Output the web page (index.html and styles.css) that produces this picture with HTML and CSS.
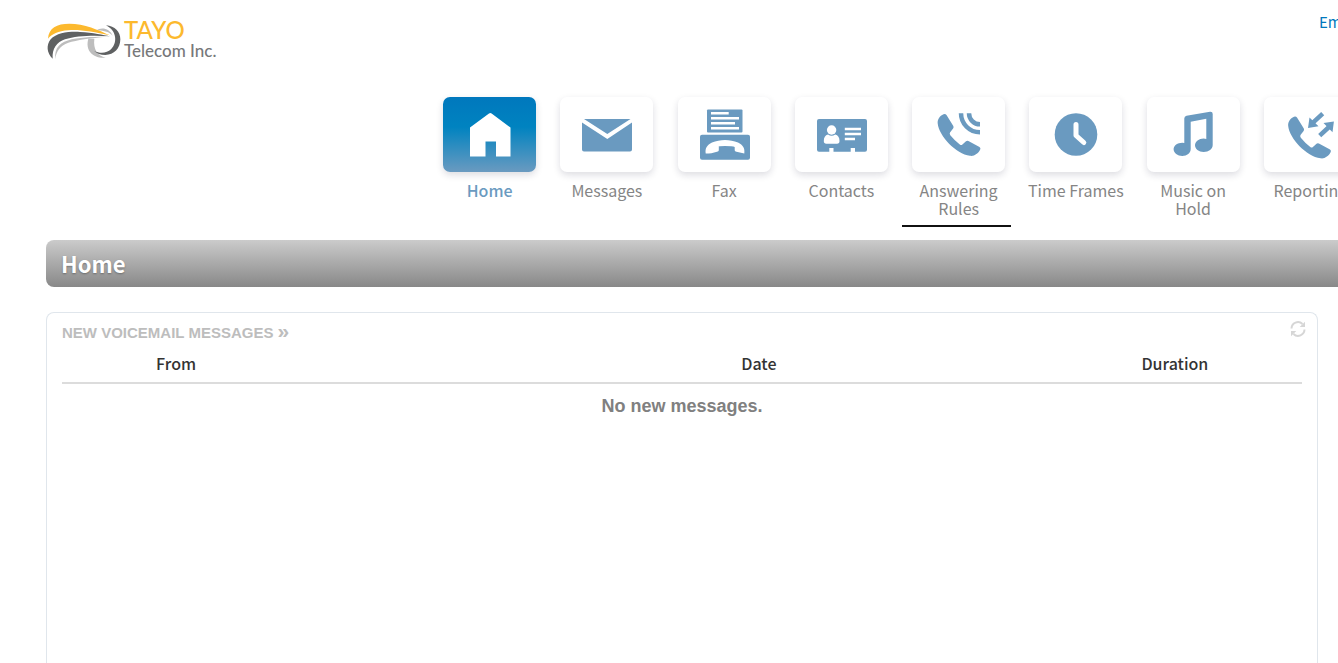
FILE: index.html
```html
<!DOCTYPE html>
<html lang="en">
<head>
<meta charset="utf-8">
<title>Home</title>
<link rel="stylesheet" href="styles.css">
</head>
<body>
<div class="page">
  <header class="top">
    <a class="logo" href="#">
      <svg class="logo-mark" viewBox="18 24 228 132" aria-hidden="true">
        <path fill="#bdbdbd" d="M46 148C42 112 62 96 95 88c35-8 75-8 105-8-50 4-90 10-115 18-25 9-37 27-39 50zM145 86c-10 34 12 60 52 57-24-6-38-24-34-57zM168 62c17-13 41-6 50 15-12-12-28-16-50-15z"/>
        <path fill="#fcb92e" d="M24 86C26 54 50 41 88 41c45 0 88 19 122 35-50-10-90-18-125-15-30 2-50 12-61 25z"/>
        <path fill="#5f6162" d="M38 146C20 130 18 105 32 88 50 68 90 64 120 66c40 2 70 9 90 13-50-4-100-2-135 9-25 8-39 28-37 58zM198 46c27 2 43 19 43 42 0 27-19 47-45 47-14 0-26-5-34-13 18 10 38 8 51-4 19-18 19-55-15-72z"/>
      </svg>
      <span class="logo-text"><span class="logo-name">TAYO</span><span class="logo-sub">Telecom Inc.</span></span>
    </a>
    <a class="account" href="#">Em</a>
  </header>

  <nav class="nav" aria-label="Main">
    <a class="item active" href="#">
      <span class="tile"><svg viewBox="0 0 93 75"><path d="M46 16.500q1.300-1 2.600 0L67.500 30.500V59.500H53V44.500H42.500V59.500H27V30.500z"/></svg></span>
      <span class="label">Home</span>
    </a>
    <a class="item" href="#">
      <span class="tile"><svg viewBox="0 0 93 75"><path d="M24 22H70.500L47.300 37zM22 25.500L47.300 42 72 25.500V52.500a2 2 0 0 1-2 2H24a2 2 0 0 1-2-2z"/></svg></span>
      <span class="label">Messages</span>
    </a>
    <a class="item" href="#">
      <span class="tile"><svg viewBox="0 0 93 75"><rect x="29" y="12.500" width="35.500" height="23" rx="1"/><rect x="22" y="37.700" width="50" height="25" rx="2"/><path class="cut" d="M33 16.300H50.700M33 21.300H61M33 26.300H57M33 31.300H61"/><path class="hole" d="M27.700 56.500C27 51 29 48 34 45.500c8-3.500 18-3.500 26 0 5 2.500 7 5.500 6.300 11L58.500 54.800c-1-.2-1.800-.8-1.800-1.800V50q-2-1-9.700-1t-6.200 1v3c0 1-.8 1.600-1.800 1.800-4 1.400-7 1.700-11.300 1.700z"/></svg></span>
      <span class="label">Fax</span>
    </a>
    <a class="item" href="#">
      <span class="tile"><svg viewBox="0 0 93 75"><path d="M24 22H70a2 2 0 0 1 2 2V52.700a2 2 0 0 1-2 2H60V51H55.700v3.700H38.500V51H34.300v3.700H24a2 2 0 0 1-2-2V24a2 2 0 0 1 2-2z"/><circle class="hole" cx="36.600" cy="33" r="4.700"/><path class="hole" d="M33 37.500q3.600 2.500 7.200 0 4.300 1 4.300 6.500 0 2.700-2.500 2.700H31.300q-2.500 0-2.500-2.700 0-5.500 4.200-6.500z"/><path class="cut" d="M49.800 32H66M49.800 37H66M49.800 42H60"/></svg></span>
      <span class="label">Contacts</span>
    </a>
    <a class="item marked" href="#">
      <span class="tile"><svg viewBox="0 0 93 75"><path id="handset" d="M31.500 17.300q1.800-.8 3 .8L41.300 29q.7 1.400-.2 2.600L38 35.500q-.7 1.300.3 2.700 4 5 9.500 9.200 1.400 1 2.600 0L54 44.300q1-1 2.400-.3L67.500 50q1.500 1 .7 2.600C66 57 62 59.500 58 58.800 44 57 27 39 25.700 26.500c-.4-4.200 2-7.500 5.800-9.200z"/><path class="line" d="M49 16.300A19 19 0 0 0 68 35.300M57 16.300A11 11 0 0 0 68 27.300"/></svg></span>
      <span class="label">Answering Rules</span>
    </a>
    <a class="item" href="#">
      <span class="tile"><svg viewBox="0 0 93 75"><circle cx="47" cy="37.500" r="21.300"/><path class="hand" d="M47 27.500V38.500L54.800 45.500"/></svg></span>
      <span class="label">Time Frames</span>
    </a>
    <a class="item" href="#">
      <span class="tile"><svg viewBox="0 0 93 75"><path d="M37.300 45.900V21.500q0-2.200 2.200-2.700L63 14.700q2.700-.3 2.700 2.300V48c0 4-4 7-9 7s-8.700-3-8.700-6.700 4-6.800 8.700-6.800q1.500 0 2.600.4V21.700L43.700 24.700V52c0 4-3.700 7-8.400 7s-8.700-3-8.700-6.700 4-6.500 8.700-6.500q1 0 2 .1z"/></svg></span>
      <span class="label">Music on Hold</span>
    </a>
    <a class="item" href="#">
      <span class="tile"><svg viewBox="0 0 93 75"><use href="#handset" transform="translate(-1.500 2.500)"/><path d="M44 31L45.500 20.500 54.500 29.300zM69.900 24.500L59.500 26 68.500 35.200z"/><path class="line" d="M49 25.600L58.700 16.600M55.700 38.700L65 30"/></svg></span>
      <span class="label">Reporting</span>
    </a>
  </nav>

  <h1 class="title">Home</h1>

  <main class="panel">
    <div class="panel-head">
      <h2 class="panel-title"><a href="#">NEW VOICEMAIL MESSAGES <span class="more">»</span></a></h2>
      <button class="refresh" type="button" aria-label="Refresh">
        <svg viewBox="0 0 16 16"><path d="M1.500 7.500A6.500 6.500 0 0 1 12.500 3M14.500 8.500A6.500 6.500 0 0 1 3.500 13"/><path class="tip" d="M15 .7V6H9.700zM1 15.300V10H6.300z"/></svg>
      </button>
    </div>
    <table class="list">
      <thead>
        <tr><th class="from">From</th><td class="name"></td><th class="date">Date</th><th class="duration">Duration</th></tr>
      </thead>
      <tbody>
        <tr><td class="empty" colspan="4">No new messages.</td></tr>
      </tbody>
    </table>
  </main>
</div>
</body>
</html>
```
FILE: styles.css
```css
* { box-sizing: border-box; }

body {
  margin: 0;
  background: #fff;
  color: #333;
  font-family: "Noto Sans CJK SC", "Noto Sans", sans-serif;
}

a { text-decoration: none; }

.page {
  display: flex;
  flex-direction: column;
  min-height: 100vh;
  padding: 0 20px 0 46px;
  overflow: hidden;
}

.top {
  display: flex;
  justify-content: space-between;
  align-items: flex-start;
  margin-right: -20px;
  padding-top: 12px;
}

.logo {
  display: flex;
  gap: 2px;
  padding-top: 6px;
}

.logo-mark {
  width: 76px;
  height: 44px;
}

.logo-text {
  display: flex;
  flex-direction: column;
  font-family: Lato, sans-serif;
  font-weight: 500;
}

.logo-name {
  color: #fcb92e;
  font-size: 24px;
  line-height: 24px;
}

.logo-sub {
  color: #77787a;
  font-size: 17px;
  line-height: 18px;
}

.account {
  flex: none;
  width: 19px;
  overflow: hidden;
  color: #0078bd;
  font-size: 15px;
  line-height: 20px;
}

.nav {
  display: grid;
  grid-template-columns: repeat(8, 1fr);
  flex: none;
  margin: 35px -51px 0 385px;
  min-height: 143px;
}

.item {
  position: relative;
  display: flex;
  flex-direction: column;
  align-items: center;
  gap: 9px;
  color: #858585;
}

.tile {
  width: 93px;
  height: 75px;
  border-radius: 7px;
  background: #fff;
  box-shadow: 0 3px 7px rgba(30, 30, 60, 0.15);
}

.tile svg {
  display: block;
  width: 93px;
  height: 75px;
  fill: #6a9ac0;
}

.tile .hole { fill: #fff; }

.tile .cut {
  fill: none;
  stroke: #fff;
  stroke-width: 2.5;
}

.tile .line {
  fill: none;
  stroke: #6a9ac0;
  stroke-width: 4.5;
}

.tile .hand {
  fill: none;
  stroke: #fff;
  stroke-width: 5;
  stroke-linecap: round;
  stroke-linejoin: round;
}

.label {
  max-width: 100px;
  font-size: 16px;
  line-height: 18px;
  text-align: center;
}

.active .tile { background: linear-gradient(#0078bd, #0083c0 40%, #6a9ac0); }
.active .tile svg { fill: #fff; }

.active .label {
  color: #6a9ac0;
  font-weight: 500;
}

.marked::after {
  content: "";
  position: absolute;
  top: 128px;
  left: 2px;
  width: 109px;
  height: 2px;
  background: #111;
}

.title {
  margin: 0 -20px 0 0;
  padding: 8px 15px 9px;
  border-radius: 8px 0 0 8px;
  background: linear-gradient(#cbcbcb, #888);
  color: #fff;
  font-size: 22px;
  font-weight: 700;
  line-height: 30px;
  text-shadow: 0 1px 2px rgba(0, 0, 0, 0.3);
}

.panel {
  flex: 1;
  margin-top: 25px;
  padding: 8px 15px;
  border: 1px solid #e0e6ec;
  border-bottom: 0;
  border-radius: 8px 8px 0 0;
}

.panel-head {
  display: flex;
  justify-content: space-between;
  align-items: flex-start;
}

.panel-title {
  margin: 0;
  padding-top: 2px;
  font-family: "Liberation Sans", Arial, sans-serif;
  font-size: 15px;
  line-height: 20px;
}

.panel-title a { color: #bdbdbd; }

.more {
  font-size: 21px;
  line-height: 16px;
}

.refresh {
  margin: 0 -4px 0 0;
  padding: 0;
  border: 0;
  background: none;
}

.refresh svg {
  display: block;
  width: 16px;
  height: 16px;
  fill: none;
  stroke: #d6d6d6;
  stroke-width: 2;
}

.refresh .tip {
  fill: #d6d6d6;
  stroke: none;
}

.list {
  width: 100%;
  border-collapse: collapse;
  table-layout: fixed;
}

.list th,
.list .name {
  padding: 9px 0 8px;
  border-bottom: 2px solid #dcdcdc;
  font-size: 16px;
  font-weight: 500;
  line-height: 22px;
  text-align: center;
}

.from { width: 18.4%; }
.name { width: 14.5%; }
.date { width: 46.6%; }
.duration { width: 20.5%; }

.list .empty {
  padding: 12px 0;
  color: #808080;
  font-family: "Liberation Sans", Arial, sans-serif;
  font-size: 18px;
  font-weight: 700;
  line-height: 20px;
  text-align: center;
}
```
